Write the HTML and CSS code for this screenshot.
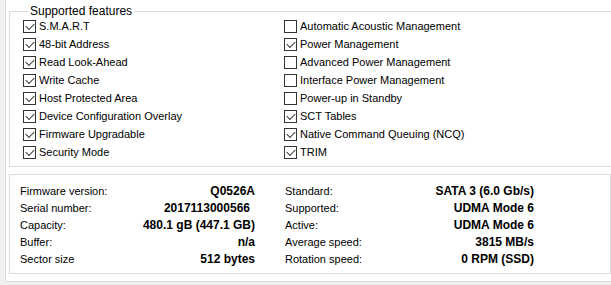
FILE: index.html
```html
<!DOCTYPE html>
<html lang="en">
<head>
    <meta charset="UTF-8">
    <title>Drive features</title>
    <link rel="stylesheet" href="styles.css">
</head>
<body>
    <div class="panel">
        <fieldset class="features">
            <legend>Supported features</legend>
            <div class="feature-grid">
                <label class="feature"><span class="box checked"></span>S.M.A.R.T</label>
                <label class="feature"><span class="box"></span>Automatic Acoustic Management</label>
                <label class="feature"><span class="box checked"></span>48-bit Address</label>
                <label class="feature"><span class="box checked"></span>Power Management</label>
                <label class="feature"><span class="box checked"></span>Read Look-Ahead</label>
                <label class="feature"><span class="box"></span>Advanced Power Management</label>
                <label class="feature"><span class="box checked"></span>Write Cache</label>
                <label class="feature"><span class="box"></span>Interface Power Management</label>
                <label class="feature"><span class="box checked"></span>Host Protected Area</label>
                <label class="feature"><span class="box"></span>Power-up in Standby</label>
                <label class="feature"><span class="box checked"></span>Device Configuration Overlay</label>
                <label class="feature"><span class="box checked"></span>SCT Tables</label>
                <label class="feature"><span class="box checked"></span>Firmware Upgradable</label>
                <label class="feature"><span class="box checked"></span>Native Command Queuing (NCQ)</label>
                <label class="feature"><span class="box checked"></span>Security Mode</label>
                <label class="feature"><span class="box checked"></span>TRIM</label>
            </div>
        </fieldset>

        <div class="info">
            <div class="info-row"><span>Firmware version:</span><b>Q0526A</b></div>
            <div class="info-row"><span>Standard:</span><b>SATA 3 (6.0 Gb/s)</b></div>
            <div class="info-row"><span>Serial number:</span><b class="pad">2017113000566</b></div>
            <div class="info-row"><span>Supported:</span><b>UDMA Mode 6</b></div>
            <div class="info-row"><span>Capacity:</span><b>480.1 gB (447.1 GB)</b></div>
            <div class="info-row"><span>Active:</span><b>UDMA Mode 6</b></div>
            <div class="info-row"><span>Buffer:</span><b>n/a</b></div>
            <div class="info-row"><span>Average speed:</span><b>3815 MB/s</b></div>
            <div class="info-row"><span>Sector size</span><b>512 bytes</b></div>
            <div class="info-row"><span>Rotation speed:</span><b>0 RPM (SSD)</b></div>
        </div>
    </div>
</body>
</html>
```

FILE: styles.css
```css
body {
    margin: 0;
    background-color: #f0f0f0;
    font-family: "Liberation Sans", Arial, sans-serif;
    font-size: 11px;
    color: #000;
    overflow: hidden;
}

.panel {
    margin-left: 5px;
    width: 620px;
    background-color: #fff;
    border: 1px solid #dcdcdc;
    border-top: none;
    padding: 4px 0 7px 3px;
}

.features {
    margin: 0;
    width: 600px;
    border: 1px solid #dcdcdc;
    padding: 0 0 5px 13px;
}

.features legend {
    padding: 0 2px;
    margin-left: 5px;
    line-height: 14px;
    font-size: 12px;
}

.feature-grid {
    display: grid;
    grid-template-columns: 261px 1fr;
    grid-auto-rows: 18px;
    margin-top: -1px;
}

.feature {
    display: flex;
    align-items: center;
    gap: 3px;
}

.box {
    width: 11px;
    height: 11px;
    border: 1px solid #333;
    background: #fff;
    position: relative;
}

.box.checked::after {
    content: "";
    position: absolute;
    left: 2px;
    top: 0px;
    width: 7px;
    height: 4px;
    border-left: 1px solid #333;
    border-bottom: 1px solid #333;
    transform: translate(0, 2px) rotate(-45deg) scale(1, 1);
}

.info {
    margin-top: 7px;
    width: 590px;
    border: 1px solid #dcdcdc;
    padding: 7px 0 6px 10px;
    display: grid;
    grid-template-columns: 235px 249px;
    column-gap: 30px;
    grid-auto-rows: 17px;
}

.info-row {
    display: flex;
    justify-content: space-between;
    align-items: center;
}

.info-row b {
    font-size: 12px;
}

.info-row b.pad {
    padding-right: 5px;
}
```
